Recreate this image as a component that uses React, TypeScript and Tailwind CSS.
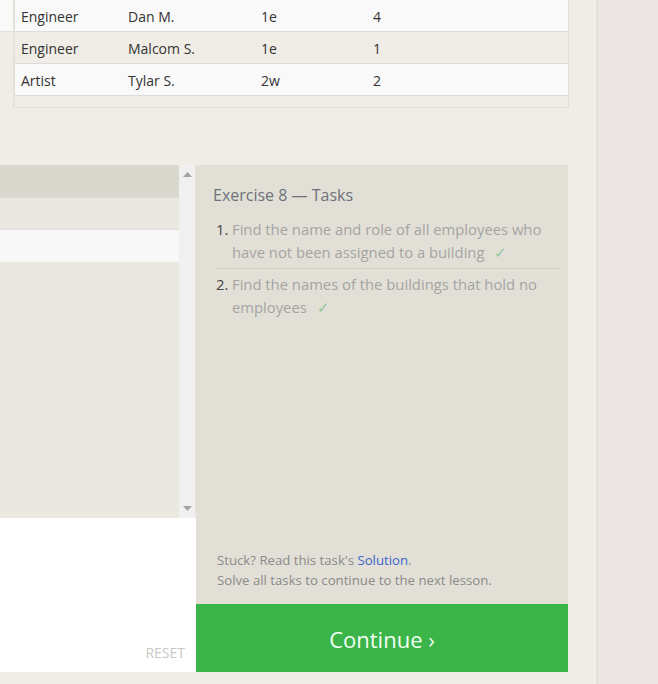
import React from "react";

const rows = [
    { role: "Engineer", name: "Dan M.", building: "1e", years: "4" },
    { role: "Engineer", name: "Malcom S.", building: "1e", years: "1" },
    { role: "Artist", name: "Tylar S.", building: "2w", years: "2" },
    { role: "Artist", name: "Sherman D.", building: "2w", years: "8" },
];

const tasks = [
    "Find the name and role of all employees who have not been assigned to a building",
    "Find the names of the buildings that hold no employees",
];

const Check: React.FC = () => (
    <span className="ml-[10px] text-[#8cc99a]">✓</span>
);

const App: React.FC = () => {
    return (
        <div
            className="flex w-[658px] h-[684px] overflow-hidden bg-[#f0ede6] text-[#333]"
            style={{ fontFamily: '"Open Sans", "Noto Sans", sans-serif' }}
        >
            <div className="w-[596px] flex flex-col shrink-0">
                {/* table peeking in at the top */}
                <div className="flex h-[108px]">
                    <div className="w-[13px] flex flex-col">
                        <div className="h-[32px] bg-[#f9f9f9] border-b border-[#e2e0da]" />
                        <div className="flex-1 bg-[#f0ede6]" />
                    </div>
                    <div className="w-[2px] bg-[#e4e1da]" />
                    <div className="w-[554px] overflow-hidden border-r border-b border-[#e2dfd8]">
                        {rows.map((r, i) => (
                            <div
                                key={i}
                                className={`grid grid-cols-[107px_133px_112px_1fr] h-[32px] pt-[1px] items-center border-b border-[#dcdcdc] text-[14px] ${i % 2 === 0 ? "bg-[#f9f9f9]" : "bg-[#f0ede6]"}`}
                            >
                                <div className="pl-[6px]">{r.role}</div>
                                <div className="pl-[6px]">{r.name}</div>
                                <div className="pl-[6px]">{r.building}</div>
                                <div className="pl-[6px]">{r.years}</div>
                            </div>
                        ))}
                    </div>
                </div>

                {/* exercise area */}
                <div className="flex mt-[57px] h-[507px] w-[568px]">
                    <div className="w-[196px] flex flex-col">
                        <div className="flex h-[353px]">
                            <div className="w-[179px] flex flex-col bg-[#eae8e1]">
                                <div className="h-[33px] bg-[#dad8ce]" />
                                <div className="h-[32px] border-b border-[#e2e1dc]" />
                                <div className="h-[32px] bg-[#f8f8f8]" />
                            </div>
                            <div className="w-[16px] bg-[#f0f0f1] flex flex-col justify-between items-center py-[7px]">
                                <svg width="9" height="5" viewBox="0 0 9 5"><polygon points="4.5,0 9,5 0,5" fill="#a3a3a3" /></svg>
                                <svg width="9" height="5" viewBox="0 0 9 5"><polygon points="0,0 9,0 4.5,5" fill="#a3a3a3" /></svg>
                            </div>
                            <div className="w-[1px] bg-[#e6e3da]" />
                        </div>
                        <div className="flex-1 bg-white flex items-end justify-end pr-[11px] pb-[9px]">
                            <span className="text-[14px] text-[#c8c8c8]">RESET</span>
                        </div>
                    </div>

                    <div className="flex-1 flex flex-col">
                        <div className="flex-1 bg-[#e2e0d6] pl-[17px] pr-[8px] pt-[18px] flex flex-col">
                            <h3 className="text-[16px] leading-[24px] text-[#6d717c]">Exercise 8 — Tasks</h3>
                            <ol className="mt-[7px] ml-[3px]">
                                {tasks.map((t, i) => (
                                    <li
                                        key={i}
                                        className={`flex text-[14.8px] leading-[23px] py-[4px] ${i === 0 ? "border-b border-[#d2d0c6]" : ""}`}
                                    >
                                        <span className="w-[16px] shrink-0 text-[#444]">{i + 1}.</span>
                                        <span className="text-[#a4a4a4]">
                                            {t}
                                            <Check />
                                        </span>
                                    </li>
                                ))}
                            </ol>
                            <div className="mt-auto pb-[14px] pl-[4px] text-[13.2px] leading-[20px] text-[#8a8a8a]">
                                <p>
                                    Stuck? Read this task's <span className="text-[#3b62c9]">Solution</span>.
                                </p>
                                <p>Solve all tasks to continue to the next lesson.</p>
                            </div>
                        </div>
                        <button className="h-[68px] pt-[3px] bg-[#3bb54a] text-[#f2fff2] text-[22px]">
                            Continue ›
                        </button>
                    </div>
                </div>
            </div>

            <div className="flex-1 bg-[#ebe6e3] border-l-2 border-[#e4dfdc]" />
        </div>
    );
};

export default App;
